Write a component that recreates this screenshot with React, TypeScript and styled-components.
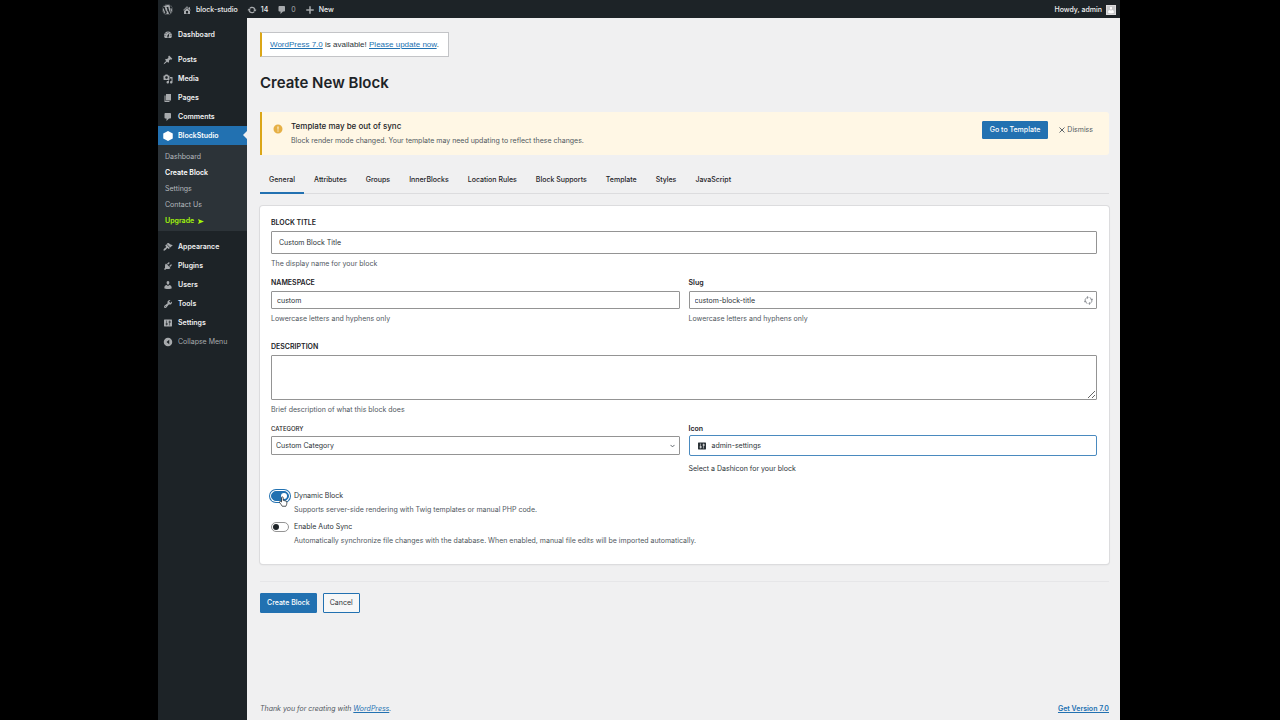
import React from "react";
import styled, { createGlobalStyle, css } from "styled-components";
import { FaWordpress } from "react-icons/fa";

const GlobalStyle = createGlobalStyle`
  *, *::before, *::after { box-sizing: border-box; }
  body {
    margin: 0;
    background: #000;
    color: #2c3338;
    font-family: Inter, "Liberation Sans", sans-serif;
    font-size: 7px;
    line-height: 10px;
  }
  h1, p, ul { margin: 0; padding: 0; }
  ul { list-style: none; }
  button, input, select, textarea { font: inherit; color: inherit; }
  button { cursor: pointer; }
`;

const glyphs = {
  dashboard:
    "M3.76 16h12.48c1.1-1.37 1.76-3.11 1.76-5 0-4.42-3.58-8-8-8s-8 3.58-8 8c0 1.89.66 3.63 1.76 5zM10 4c.55 0 1 .45 1 1s-.45 1-1 1-1-.45-1-1 .45-1 1-1zM6 6c.55 0 1 .45 1 1s-.45 1-1 1-1-.45-1-1 .45-1 1-1zm8 0c.55 0 1 .45 1 1s-.45 1-1 1-1-.45-1-1 .45-1 1-1zm-5.37 5.55L12 7v6c0 1.1-.9 2-2 2s-2-.9-2-2c0-.57.24-1.08.63-1.45zM4 10c.55 0 1 .45 1 1s-.45 1-1 1-1-.45-1-1 .45-1 1-1zm12 0c.55 0 1 .45 1 1s-.45 1-1 1-1-.45-1-1 .45-1 1-1zm-5 3c0-.55-.45-1-1-1s-1 .45-1 1 .45 1 1 1 1-.45 1-1z",
  pin: "M10.44 3.02l1.82-1.82 6.36 6.35-1.83 1.82c-1.05-.68-2.48-.57-3.41.36l-.75.75c-.92.93-1.04 2.35-.35 3.41l-1.83 1.82-2.41-2.41-2.8 2.79c-.42.42-3.38 2.71-3.8 2.29s1.86-3.39 2.28-3.81l2.79-2.79L4.1 9.36l1.83-1.82c1.05.69 2.48.57 3.4-.36l.75-.75c.93-.92 1.05-2.35.36-3.41z",
  media:
    "M13 11V4c0-.55-.45-1-1-1h-1.67L9 1H5L3.67 3H2c-.55 0-1 .45-1 1v7c0 .55.45 1 1 1h10c.55 0 1-.45 1-1zM7 4.5c1.38 0 2.5 1.12 2.5 2.5S8.38 9.5 7 9.5 4.5 8.38 4.5 7 5.62 4.5 7 4.5zM14 6h5v10.5c0 1.38-1.12 2.5-2.5 2.5S14 17.88 14 16.5s1.12-2.5 2.5-2.5c.17 0 .34.02.5.05V9h-3V6zm-4 8.05V13h2v3.5c0 1.38-1.12 2.5-2.5 2.5S7 17.88 7 16.5 8.12 14 9.5 14c.17 0 .34.02.5.05z",
  pages: "M6 15V2h10v13H6zm-1 1h8v2H3V5h2v11z",
  comment:
    "M5 2h9c1.1 0 2 .9 2 2v7c0 1.1-.9 2-2 2h-2l-5 5v-5H5c-1.1 0-2-.9-2-2V4c0-1.1.9-2 2-2z",
  brush:
    "M14.48 11.06L7.41 3.99l1.5-1.5c.5-.56 2.3-.47 3.51.32 1.21.8 1.43 1.28 2.91 2.1 1.18.64 2.45 1.26 4.45.85zm-.71.71L6.7 4.7 4.93 6.47c-.39.39-.39 1.02 0 1.41l1.06 1.06c.39.39.39 1.03 0 1.42-.6.6-1.43 1.11-2.21 1.69-.35.26-.7.53-1.01.84C1.43 14.23.4 16.08 1.4 17.07c.99 1 2.84-.03 4.18-1.36.31-.31.58-.66.85-1.02.57-.78 1.08-1.61 1.69-2.21.39-.39 1.02-.39 1.41 0l1.06 1.06c.39.39 1.02.39 1.41 0z",
  plug: "M13.11 4.36L9.87 7.6 8 5.73l3.24-3.24c.35-.34 1.05-.2 1.56.32.52.51.66 1.21.31 1.55zm-8 1.77l.91-1.12 9.01 9.01-1.19.84c-.71.71-2.63 1.16-3.82 1.16H6.14L4.9 17.26c-.59.59-1.54.59-2.12 0-.59-.58-.59-1.53 0-2.12l1.24-1.24v-3.88c0-1.13.4-3.19 1.09-3.89zm7.26 3.97l3.24-3.24c.34-.35 1.04-.21 1.55.31.52.51.66 1.21.31 1.55l-3.24 3.25z",
  user: "M10 9.25c-2.27 0-2.73-3.44-2.73-3.44C7 4.02 7.82 2 9.97 2c2.16 0 2.98 2.02 2.71 3.81 0 0-.41 3.44-2.68 3.44zm0 2.57L12.72 10c2.39 0 4.52 2.33 4.52 4.53v2.49s-3.65 1.13-7.24 1.13c-3.65 0-7.24-1.13-7.24-1.13v-2.49c0-2.25 1.94-4.48 4.47-4.48z",
  wrench:
    "M16.68 9.77c-1.34 1.34-3.3 1.67-4.95.99l-5.41 6.52c-.99.99-2.59.99-3.58 0s-.99-2.59 0-3.57l6.52-5.42c-.68-1.65-.35-3.61.99-4.95 1.28-1.28 3.12-1.62 4.72-1.06l-2.89 2.89 2.82 2.82 2.86-2.87c.53 1.58.18 3.39-1.08 4.65zM3.81 16.21c.4.39 1.04.39 1.43 0 .4-.4.4-1.04 0-1.43-.39-.4-1.03-.4-1.43 0-.39.39-.39 1.03 0 1.43z",
  sliders:
    "M18 16V4c0-.55-.45-1-1-1H3c-.55 0-1 .45-1 1v12c0 .55.45 1 1 1h14c.55 0 1-.45 1-1zM8 11h1c.55 0 1 .45 1 1s-.45 1-1 1H8v1.5c0 .28-.22.5-.5.5s-.5-.22-.5-.5V13H6c-.55 0-1-.45-1-1s.45-1 1-1h1V5.5c0-.28.22-.5.5-.5s.5.22.5.5V11zm5-2h-1c-.55 0-1-.45-1-1s.45-1 1-1h1V5.500c0-.28.22-.5.5-.5s.5.22.5.5V7h1c.55 0 1 .45 1 1s-.45 1-1 1h-1v5.500c0 .28-.22.5-.5.5s-.5-.22-.5-.5V9z",
  home: "M16 8.500l1.530 1.530-1.060 1.060L10 4.600l-6.470 6.490-1.060-1.060L10 2.500l4 4v-2h2v4zm-6-2.460l6 5.990V18H4v-5.970zM12 17v-5H8v5h4z",
  update:
    "M10.2 3.28c3.53 0 6.43 2.61 6.92 6h2.08l-3.5 4-3.5-4h2.32c-.45-1.97-2.21-3.45-4.32-3.45-1.45 0-2.73.71-3.54 1.78L4.95 5.66C6.23 4.2 8.11 3.28 10.2 3.28zm-.4 13.44c-3.52 0-6.43-2.61-6.92-6H.8l3.5-4c1.17 1.33 2.33 2.67 3.5 4H5.48c.45 1.97 2.21 3.45 4.32 3.45 1.45 0 2.73-.71 3.54-1.78l1.71 1.95c-1.28 1.46-3.15 2.38-5.25 2.38z",
  plus: "M8.500 2.500h3v6h6v3h-6v6h-3v-6h-6v-3h6z",
  collapse: "M10 1.500a8.500 8.500 0 1 1 0 17 8.500 8.500 0 0 1 0-17zM12.500 5.500L7 10l5.500 4.500z",
  cube: "M10 0l9.500 5v10L10 20l-9.500-5V5z",
  alert: "M10 1a9 9 0 1 1 0 18 9 9 0 0 1 0-18zM8.800 5l.4 6.500h1.600l.4-6.500zM8.800 13v2.200h2.400V13z",
};

type GlyphName = keyof typeof glyphs;

const Svg = styled.svg`
  display: block;
  flex: none;
`;

function Glyph({ name, size = 10 }: { name: GlyphName; size?: number }) {
  return (
    <Svg width={size} height={size} viewBox="0 0 20 20" fill="currentColor" fillRule="evenodd" aria-hidden="true">
      <path d={glyphs[name]} />
    </Svg>
  );
}

const Screen = styled.div`
  display: flex;
  flex-direction: column;
  min-height: 100vh;
  margin: 0 160px 0 158px;
  background: #f0f0f1;
`;

const AdminBar = styled.header`
  display: flex;
  align-items: center;
  height: 18px;
  padding: 1px 4px 0;
  background: #1d2327;
  color: #f0f0f1;
`;

const BarLink = styled.a<{ $muted?: boolean }>`
  display: flex;
  align-items: center;
  gap: 4px;
  margin-right: 9px;
  color: ${(p) => (p.$muted ? "#a7aaad" : "#f0f0f1")};
  font-weight: ${(p) => (p.$muted ? 400 : 500)};
  text-decoration: none;
  svg { color: #a7aaad; }
`;

const Account = styled(BarLink)`
  margin: 0 0 0 auto;
`;

const Avatar = styled.span`
  display: flex;
  align-items: flex-end;
  justify-content: center;
  width: 10px;
  height: 10px;
  background: #c8cacc;
  border: 1px solid #dcdcde;
  svg { color: #fff; }
`;

const Columns = styled.div`
  display: flex;
  flex: 1;
`;

const Sidebar = styled.nav`
  flex: none;
  width: 89px;
  padding-top: 7px;
  background: #1d2327;
`;

const MenuItem = styled.li<{ $spaced?: boolean }>`
  margin-top: ${(p) => (p.$spaced ? 6 : 0)}px;
`;

const menuRow = css`
  display: flex;
  align-items: center;
  gap: 5px;
  width: 100%;
  height: 19px;
  padding: 0 5px;
  border: 0;
  background: none;
`;

const MenuLink = styled.a<{ $active?: boolean }>`
  ${menuRow}
  position: relative;
  color: #f0f0f1;
  font-weight: 600;
  text-decoration: none;
  svg { color: #a7aaad; }
  ${(p) =>
    p.$active &&
    css`
      background: #2271b1;
      color: #fff;
      svg { color: #fff; }
      &::after {
        content: "";
        position: absolute;
        right: 0;
        top: 5px;
        border: 4px solid transparent;
        border-right-color: #f0f0f1;
        border-left-width: 0;
      }
    `}
`;

const CollapseButton = styled.button`
  ${menuRow}
  color: #a7aaad;
`;

const Submenu = styled.ul`
  padding: 4px 0 2px;
  background: #2c3338;
`;

const SubLink = styled.a<{ $tone?: "current" | "upgrade" }>`
  display: flex;
  align-items: center;
  gap: 4px;
  height: 16px;
  padding: 0 7px;
  color: ${(p) => (p.$tone === "current" ? "#fff" : p.$tone === "upgrade" ? "#a3f70b" : "#b4b9be")};
  font-weight: ${(p) => (p.$tone ? 600 : 400)};
  text-decoration: none;
`;

const Main = styled.main`
  display: flex;
  flex: 1;
  flex-direction: column;
  min-width: 0;
  padding: 14px 11px 6px 13px;
`;

const TextLink = styled.a`
  color: #2271b1;
`;

const UpdateNag = styled.div`
  align-self: flex-start;
  height: 25px;
  padding: 7px 9px 7px 8px;
  border: 1px solid #c3c4c7;
  border-left: 2px solid #dba617;
  background: #fff;
  font-family: "Liberation Sans", sans-serif;
  font-size: 8px;
`;

const Title = styled.h1`
  margin-top: 16px;
  color: #1d2327;
  font-size: 15px;
  font-weight: 600;
  line-height: 20px;
`;

const SyncNotice = styled.section`
  display: flex;
  align-items: flex-start;
  gap: 8px;
  min-height: 43px;
  margin-top: 19px;
  padding: 9px 16px 8px 11px;
  border-left: 2px solid #dba617;
  border-radius: 0 3px 3px 0;
  background: #fff7e5;
`;

const SyncIcon = styled.span`
  margin-top: 3px;
  color: #e6b045;
`;

const SyncText = styled.div`
  flex: 1;
`;

const SyncHeading = styled.p`
  color: #1d2327;
  font-size: 8px;
  font-weight: 500;
`;

const SyncBody = styled.p`
  margin-top: 5px;
  color: #50575e;
`;

const Button = styled.button<{ $primary?: boolean }>`
  height: 20px;
  padding: 0 6px;
  border: 1px solid #2271b1;
  border-radius: 1px;
  background: ${(p) => (p.$primary ? "#2271b1" : "#f6f7f7")};
  color: ${(p) => (p.$primary ? "#fff" : "#2c3338")};
  font-weight: ${(p) => (p.$primary ? 500 : 400)};
`;

const SyncButton = styled(Button)`
  height: 18px;
  padding: 0 7px;
`;

const DismissButton = styled.button`
  display: flex;
  align-items: center;
  gap: 2px;
  height: 18px;
  margin-left: 3px;
  padding: 0;
  border: 0;
  background: none;
  color: #50575e;
`;

const Tabs = styled.div`
  display: flex;
  gap: 1px;
  height: 27px;
  margin-top: 12px;
  border-bottom: 1px solid #dcdcde;
`;

const Tab = styled.button<{ $active?: boolean }>`
  height: 27px;
  padding: 0 9px;
  border: 0;
  border-bottom: 2px solid ${(p) => (p.$active ? "#2271b1" : "transparent")};
  background: none;
  color: #1d2327;
  font-weight: 500;
`;

const Card = styled.form`
  margin-top: 12px;
  padding: 12px 12px 18px 11px;
  border-radius: 3px;
  background: #fff;
  box-shadow: 0 0 0 1px #dcdcde, 0 1px 2px #0000001a;
`;

const Row = styled.div<{ $gap: number }>`
  display: grid;
  grid-template-columns: repeat(auto-fit, minmax(200px, 1fr));
  gap: 9px;
  margin-top: ${(p) => p.$gap}px;
`;

const Field = styled.div`
  display: flex;
  flex-direction: column;
`;

const Label = styled.label<{ $small?: boolean; $gap?: number }>`
  margin-bottom: ${(p) => p.$gap ?? 3}px;
  color: #1d2327;
  font-size: ${(p) => (p.$small ? 6 : 7)}px;
  font-weight: ${(p) => (p.$small ? 500 : 600)};
`;

const control = css`
  width: 100%;
  border: 1px solid #949494;
  border-radius: 1px;
  background: #fff;
  color: #2c3338;
  outline: 0;
`;

const TextInput = styled.input<{ $tall?: boolean }>`
  ${control}
  height: ${(p) => (p.$tall ? 23 : 18)}px;
  padding: 0 ${(p) => (p.$tall ? 7 : 5)}px;
`;

const TextArea = styled.textarea`
  ${control}
  display: block;
  height: 45px;
  padding: 4px;
  resize: vertical;
`;

const Adorned = styled.div`
  position: relative;
`;

const Select = styled.select`
  ${control}
  display: block;
  height: 19px;
  padding: 0 4px;
  appearance: none;
`;

const Adornment = styled.span`
  position: absolute;
  top: 0;
  bottom: 0;
  right: 5px;
  display: flex;
  align-items: center;
  color: #50575e;
  pointer-events: none;
`;

const RefreshButton = styled.button`
  position: absolute;
  top: 0;
  bottom: 0;
  right: 4px;
  display: flex;
  align-items: center;
  padding: 0;
  border: 0;
  background: none;
  color: #787c82;
`;

const IconPicker = styled.button`
  ${control}
  display: flex;
  align-items: center;
  gap: 5px;
  height: 21px;
  padding: 0 7px;
  border-color: #4a8abf;
  border-radius: 2px;
`;

const Help = styled.p<{ $gap?: number; $dark?: boolean }>`
  margin-top: ${(p) => p.$gap ?? 5}px;
  color: ${(p) => (p.$dark ? "#2c3338" : "#50575e")};
`;

const Toggle = styled.div<{ $gap: number }>`
  display: grid;
  grid-template-columns: 18px 1fr;
  column-gap: 5px;
  align-items: center;
  margin-top: ${(p) => p.$gap}px;
  p { grid-column: 2; }
`;

const SwitchSlot = styled.div`
  position: relative;
  height: 10px;
`;

const Switch = styled.input`
  display: flex;
  align-items: center;
  width: 18px;
  height: 10px;
  margin: 0;
  padding: 0 1px;
  appearance: none;
  border: 1px solid #949494;
  border-radius: 5px;
  background: #fff;
  &::before {
    content: "";
    width: 6px;
    height: 6px;
    border-radius: 50%;
    background: #1d2327;
  }
  &:checked {
    justify-content: flex-end;
    border-color: #2271b1;
    background: #2271b1;
    box-shadow: 0 0 0 1px #fff, 0 0 0 2px #2271b1;
  }
  &:checked::before { background: #fff; }
`;

const Pointer = styled.svg`
  position: absolute;
  left: 7px;
  top: 5px;
`;

const Actions = styled.div`
  display: flex;
  gap: 6px;
  margin-top: 17px;
  padding-top: 11px;
  border-top: 1px solid #e6e6e8;
`;

const Footer = styled.footer`
  display: flex;
  justify-content: space-between;
  margin-top: auto;
  color: #50575e;
  em a { font-style: italic; }
`;

const VersionLink = styled(TextLink)`
  font-weight: 600;
`;

const topMenu: { name: string; icon: GlyphName; spaced?: boolean }[] = [
  { name: "Dashboard", icon: "dashboard" },
  { name: "Posts", icon: "pin", spaced: true },
  { name: "Media", icon: "media" },
  { name: "Pages", icon: "pages" },
  { name: "Comments", icon: "comment" },
];

const lowerMenu: { name: string; icon: GlyphName; spaced?: boolean }[] = [
  { name: "Appearance", icon: "brush", spaced: true },
  { name: "Plugins", icon: "plug" },
  { name: "Users", icon: "user" },
  { name: "Tools", icon: "wrench" },
  { name: "Settings", icon: "sliders" },
];

const tabs = [
  "General",
  "Attributes",
  "Groups",
  "InnerBlocks",
  "Location Rules",
  "Block Supports",
  "Template",
  "Styles",
  "JavaScript",
];

function MenuEntries({ items }: { items: typeof topMenu }) {
  return (
    <>
      {items.map((item) => (
        <MenuItem key={item.name} $spaced={item.spaced}>
          <MenuLink href="#">
            <Glyph name={item.icon} />
            {item.name}
          </MenuLink>
        </MenuItem>
      ))}
    </>
  );
}

export default function App() {
  return (
    <>
      <GlobalStyle />
      <Screen>
        <AdminBar>
          <BarLink href="#" aria-label="About WordPress">
            <FaWordpress size={11} />
          </BarLink>
          <BarLink href="#"><Glyph name="home" />block-studio</BarLink>
          <BarLink href="#"><Glyph name="update" />14</BarLink>
          <BarLink href="#" $muted><Glyph name="comment" />0</BarLink>
          <BarLink href="#"><Glyph name="plus" />New</BarLink>
          <Account href="#">
            Howdy, admin
            <Avatar><Glyph name="user" size={8} /></Avatar>
          </Account>
        </AdminBar>
        <Columns>
          <Sidebar aria-label="Main menu">
            <ul>
              <MenuEntries items={topMenu} />
              <MenuItem>
                <MenuLink href="#" $active><Glyph name="cube" />BlockStudio</MenuLink>
                <Submenu>
                  <li><SubLink href="#">Dashboard</SubLink></li>
                  <li><SubLink href="#" $tone="current">Create Block</SubLink></li>
                  <li><SubLink href="#">Settings</SubLink></li>
                  <li><SubLink href="#">Contact Us</SubLink></li>
                  <li>
                    <SubLink href="#" $tone="upgrade">
                      Upgrade
                      <Svg width="6" height="5" viewBox="0 0 12 10" fill="currentColor" aria-hidden="true">
                        <path d="M0 0l12 5-12 5 2-5z" />
                      </Svg>
                    </SubLink>
                  </li>
                </Submenu>
              </MenuItem>
              <MenuEntries items={lowerMenu} />
              <MenuItem>
                <CollapseButton type="button"><Glyph name="collapse" />Collapse Menu</CollapseButton>
              </MenuItem>
            </ul>
          </Sidebar>
          <Main>
            <UpdateNag>
              <TextLink href="#">WordPress 7.0</TextLink> is available! <TextLink href="#">Please update now</TextLink>.
            </UpdateNag>
            <Title>Create New Block</Title>
            <SyncNotice>
              <SyncIcon><Glyph name="alert" /></SyncIcon>
              <SyncText>
                <SyncHeading>Template may be out of sync</SyncHeading>
                <SyncBody>
                  Block render mode changed. Your template may need updating to reflect these changes.
                </SyncBody>
              </SyncText>
              <SyncButton type="button" $primary>Go to Template</SyncButton>
              <DismissButton type="button">
                <Svg width="6" height="6" viewBox="0 0 6 6" stroke="currentColor" strokeWidth="0.9" aria-hidden="true">
                  <path d="M.5.5l5 5M5.5.5l-5 5" />
                </Svg>
                Dismiss
              </DismissButton>
            </SyncNotice>
            <Tabs role="tablist">
              {tabs.map((name, i) => (
                <Tab key={name} type="button" role="tab" aria-selected={i === 0} $active={i === 0}>
                  {name}
                </Tab>
              ))}
            </Tabs>
            <Card id="block-form">
              <Field>
                <Label htmlFor="title">BLOCK TITLE</Label>
                <TextInput id="title" $tall defaultValue="Custom Block Title" />
                <Help>The display name for your block</Help>
              </Field>
              <Row $gap={9}>
                <Field>
                  <Label htmlFor="namespace">NAMESPACE</Label>
                  <TextInput id="namespace" defaultValue="custom" />
                  <Help>Lowercase letters and hyphens only</Help>
                </Field>
                <Field>
                  <Label htmlFor="slug">Slug</Label>
                  <Adorned>
                    <TextInput id="slug" defaultValue="custom-block-title" />
                    <RefreshButton type="button" aria-label="Regenerate slug">
                      <Svg width="9" height="9" viewBox="0 0 20 20" fill="none" stroke="currentColor" strokeWidth="1.700" aria-hidden="true">
                        <path d="M2.500 12A7.600 7.600 0 0 1 9 3.200M6.500.5L9.500 3.200 6.500 6M17.500 8A7.600 7.600 0 0 1 11 16.800M13.500 19.500L10.500 16.800 13.500 14M12.500 3.500A7.600 7.600 0 0 1 17.500 8.500M14.500 7L17.500 9 19.500 6M7.500 16.500A7.600 7.600 0 0 1 2.500 11.500M.5 14L2.500 11 5.500 13" />
                      </Svg>
                    </RefreshButton>
                  </Adorned>
                  <Help>Lowercase letters and hyphens only</Help>
                </Field>
              </Row>
              <Row $gap={18}>
                <Field>
                  <Label htmlFor="description">DESCRIPTION</Label>
                  <TextArea id="description" />
                  <Help>Brief description of what this block does</Help>
                </Field>
              </Row>
              <Row $gap={9}>
                <Field>
                  <Label htmlFor="category" $small $gap={2}>CATEGORY</Label>
                  <Adorned>
                    <Select id="category" defaultValue="custom">
                      <option value="custom">Custom Category</option>
                    </Select>
                    <Adornment>
                      <Svg width="5" height="4" viewBox="0 0 10 6" fill="none" stroke="currentColor" strokeWidth="1.800" aria-hidden="true">
                        <path d="M1 .8l4 4 4-4" />
                      </Svg>
                    </Adornment>
                  </Adorned>
                </Field>
                <Field>
                  <Label htmlFor="icon" $gap={1}>Icon</Label>
                  <IconPicker id="icon" type="button"><Glyph name="sliders" />admin-settings</IconPicker>
                  <Help $gap={8} $dark>Select a Dashicon for your block</Help>
                </Field>
              </Row>
              <Toggle $gap={17}>
                <SwitchSlot>
                  <Switch id="dynamic" type="checkbox" role="switch" defaultChecked />
                  <Pointer width="10" height="11" viewBox="0 0 20 22" fill="#fff" stroke="#1d2327" strokeWidth="1.500" strokeLinejoin="round" aria-hidden="true">
                    <path d="M7 12V3.500a1.700 1.700 0 0 1 3.400 0V9c1-.8 2.200-.4 2.600.6 1-.5 2.100-.1 2.400.8 1.200-.4 2.400.3 2.400 1.600 0 4-.6 5.500-2 8.500H8.500C7 17.500 5 15.500 3 13c-.8-1.500 1-2.600 2.200-1.800z" />
                  </Pointer>
                </SwitchSlot>
                <label htmlFor="dynamic">Dynamic Block</label>
                <Help $gap={4}>Supports server-side rendering with Twig templates or manual PHP code.</Help>
              </Toggle>
              <Toggle $gap={7}>
                <SwitchSlot>
                  <Switch id="autosync" type="checkbox" role="switch" />
                </SwitchSlot>
                <label htmlFor="autosync">Enable Auto Sync</label>
                <Help $gap={4}>
                  Automatically synchronize file changes with the database. When enabled, manual file edits will be
                  imported automatically.
                </Help>
              </Toggle>
            </Card>
            <Actions>
              <Button type="submit" form="block-form" $primary>Create Block</Button>
              <Button type="button">Cancel</Button>
            </Actions>
            <Footer>
              <em>Thank you for creating with <TextLink href="#">WordPress</TextLink>.</em>
              <VersionLink href="#">Get Version 7.0</VersionLink>
            </Footer>
          </Main>
        </Columns>
      </Screen>
    </>
  );
}
